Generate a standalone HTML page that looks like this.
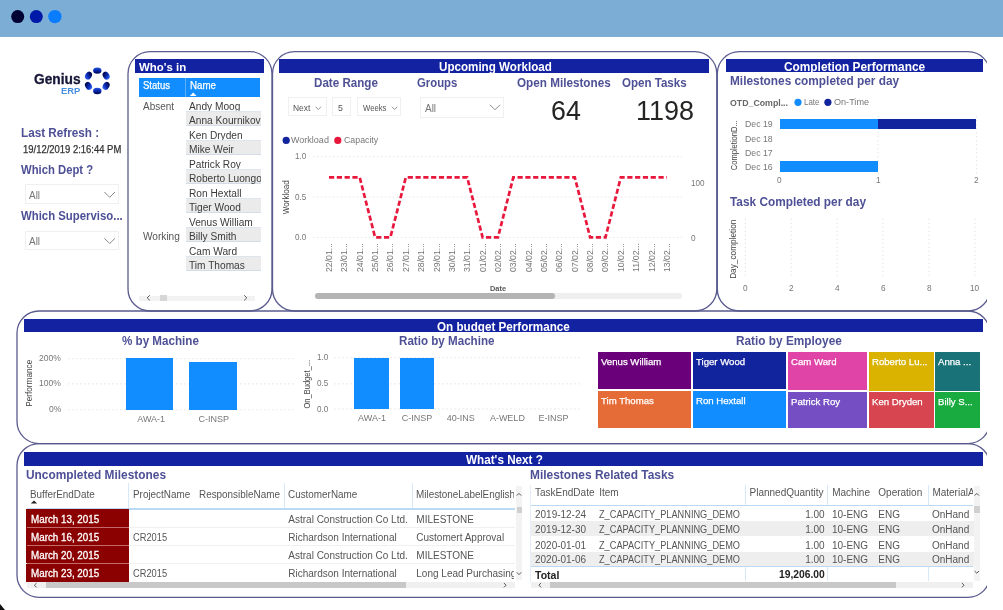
<!DOCTYPE html><html><head><meta charset="utf-8"><style>
html,body{margin:0;padding:0;background:#fff;width:1003px;height:610px;overflow:hidden;position:relative;font-family:"Liberation Sans",sans-serif}
.t{position:absolute;white-space:nowrap;line-height:1;transform-origin:0 0}
.c{position:absolute;overflow:hidden}
</style></head><body><div style="position:absolute;left:0;top:0;width:1003px;height:610px;overflow:hidden;filter:blur(0.35px)">
<svg style="position:absolute;left:0;top:0" width="1003" height="610" viewBox="0 0 1003 610"><line x1="312.8" y1="156.8" x2="682" y2="156.8" stroke="#e4e4e4" stroke-width="1" stroke-dasharray="1.5 2.5"/><line x1="312.8" y1="197.1" x2="682" y2="197.1" stroke="#e4e4e4" stroke-width="1" stroke-dasharray="1.5 2.5"/><line x1="312.8" y1="237.3" x2="682" y2="237.3" stroke="#e4e4e4" stroke-width="1" stroke-dasharray="1.5 2.5"/><line x1="878.1" y1="116" x2="878.1" y2="174" stroke="#e4e4e4" stroke-width="1" stroke-dasharray="1.5 2.5"/><line x1="976.4" y1="116" x2="976.4" y2="174" stroke="#e4e4e4" stroke-width="1" stroke-dasharray="1.5 2.5"/><line x1="745.4" y1="218.6" x2="745.4" y2="278" stroke="#e4e4e4" stroke-width="1" stroke-dasharray="1.5 2.5"/><line x1="791.2" y1="218.6" x2="791.2" y2="278" stroke="#e4e4e4" stroke-width="1" stroke-dasharray="1.5 2.5"/><line x1="837" y1="218.6" x2="837" y2="278" stroke="#e4e4e4" stroke-width="1" stroke-dasharray="1.5 2.5"/><line x1="883" y1="218.6" x2="883" y2="278" stroke="#e4e4e4" stroke-width="1" stroke-dasharray="1.5 2.5"/><line x1="929" y1="218.6" x2="929" y2="278" stroke="#e4e4e4" stroke-width="1" stroke-dasharray="1.5 2.5"/><line x1="975" y1="218.6" x2="975" y2="278" stroke="#e4e4e4" stroke-width="1" stroke-dasharray="1.5 2.5"/><line x1="68" y1="358.7" x2="295" y2="358.7" stroke="#e4e4e4" stroke-width="1" stroke-dasharray="1.5 2.5"/><line x1="68" y1="383.9" x2="295" y2="383.9" stroke="#e4e4e4" stroke-width="1" stroke-dasharray="1.5 2.5"/><line x1="68" y1="409.8" x2="295" y2="409.8" stroke="#e4e4e4" stroke-width="1" stroke-dasharray="1.5 2.5"/><line x1="334.3" y1="357.7" x2="580" y2="357.7" stroke="#e4e4e4" stroke-width="1" stroke-dasharray="1.5 2.5"/><line x1="334.3" y1="383.9" x2="580" y2="383.9" stroke="#e4e4e4" stroke-width="1" stroke-dasharray="1.5 2.5"/><line x1="334.3" y1="409" x2="580" y2="409" stroke="#e4e4e4" stroke-width="1" stroke-dasharray="1.5 2.5"/></svg>
<div style="position:absolute;left:0.00px;top:0.00px;width:1003.00px;height:37.00px;background:#7badd5;"></div>
<div style="position:absolute;left:24.70px;top:184.40px;width:94.20px;height:19.50px;background:transparent;border:1px solid #f0f0f0;box-sizing:border-box;"></div>
<div style="position:absolute;left:24.70px;top:230.70px;width:94.20px;height:19.70px;background:transparent;border:1px solid #f0f0f0;box-sizing:border-box;"></div>
<div style="position:absolute;left:135.3px;top:59.4px;width:128.7px;height:13.6px;background:#1222a0;overflow:hidden" id="bar1"></div>
<div style="position:absolute;left:139.30px;top:77.50px;width:121.20px;height:19.50px;background:#118dff;"></div>
<div style="position:absolute;left:184.60px;top:77.50px;width:0.80px;height:19.50px;background:#5fb0ff;"></div>
<div style="position:absolute;left:185.50px;top:111.48px;width:75.00px;height:14.48px;background:#ebebeb;"></div>
<div style="position:absolute;left:185.50px;top:111.48px;width:75.00px;height:1.00px;background:#dfe5ef;"></div>
<div style="position:absolute;left:185.50px;top:124.96px;width:75.00px;height:1.00px;background:#d4dcea;"></div>
<div style="position:absolute;left:185.50px;top:140.44px;width:75.00px;height:14.48px;background:#ebebeb;"></div>
<div style="position:absolute;left:185.50px;top:140.44px;width:75.00px;height:1.00px;background:#dfe5ef;"></div>
<div style="position:absolute;left:185.50px;top:153.92px;width:75.00px;height:1.00px;background:#d4dcea;"></div>
<div style="position:absolute;left:185.50px;top:169.40px;width:75.00px;height:14.48px;background:#ebebeb;"></div>
<div style="position:absolute;left:185.50px;top:169.40px;width:75.00px;height:1.00px;background:#dfe5ef;"></div>
<div style="position:absolute;left:185.50px;top:182.88px;width:75.00px;height:1.00px;background:#d4dcea;"></div>
<div style="position:absolute;left:185.50px;top:198.36px;width:75.00px;height:14.48px;background:#ebebeb;"></div>
<div style="position:absolute;left:185.50px;top:198.36px;width:75.00px;height:1.00px;background:#dfe5ef;"></div>
<div style="position:absolute;left:185.50px;top:211.84px;width:75.00px;height:1.00px;background:#d4dcea;"></div>
<div style="position:absolute;left:185.50px;top:227.32px;width:75.00px;height:14.48px;background:#ebebeb;"></div>
<div style="position:absolute;left:185.50px;top:227.32px;width:75.00px;height:1.00px;background:#dfe5ef;"></div>
<div style="position:absolute;left:185.50px;top:240.80px;width:75.00px;height:1.00px;background:#d4dcea;"></div>
<div style="position:absolute;left:185.50px;top:256.28px;width:75.00px;height:14.48px;background:#ebebeb;"></div>
<div style="position:absolute;left:185.50px;top:256.28px;width:75.00px;height:1.00px;background:#dfe5ef;"></div>
<div style="position:absolute;left:185.50px;top:269.76px;width:75.00px;height:1.00px;background:#d4dcea;"></div>
<div style="position:absolute;left:139.20px;top:295.50px;width:116.30px;height:5.00px;background:#f2f2f2;"></div>
<div style="position:absolute;left:159.50px;top:295.00px;width:7.00px;height:6.00px;background:#d6d6d6;"></div>
<div style="position:absolute;left:278.7px;top:59.3px;width:430.8px;height:13.4px;background:#1222a0"></div>
<div style="position:absolute;left:287.70px;top:97.40px;width:39.00px;height:19.10px;background:transparent;border:1px solid #f0f0f0;box-sizing:border-box;"></div>
<div style="position:absolute;left:331.80px;top:97.40px;width:19.50px;height:19.10px;background:transparent;border:1px solid #f0f0f0;box-sizing:border-box;"></div>
<div style="position:absolute;left:357.20px;top:97.40px;width:44.10px;height:19.10px;background:transparent;border:1px solid #f0f0f0;box-sizing:border-box;"></div>
<div style="position:absolute;left:420.00px;top:97.40px;width:84.40px;height:20.40px;background:transparent;border:1px solid #f0f0f0;box-sizing:border-box;"></div>
<div style="position:absolute;left:315.00px;top:293.00px;width:367.00px;height:5.50px;background:#efefef;border-radius:3px;"></div>
<div style="position:absolute;left:315.00px;top:293.00px;width:240.20px;height:5.50px;background:#b4b4b4;border-radius:3px;"></div>
<div style="position:absolute;left:725.5px;top:59.3px;width:257.5px;height:13.2px;background:#1222a0"></div>
<div style="position:absolute;left:779.90px;top:118.90px;width:98.20px;height:10.50px;background:#118dff;"></div>
<div style="position:absolute;left:878.10px;top:118.90px;width:98.30px;height:10.50px;background:#12239e;"></div>
<div style="position:absolute;left:779.90px;top:161.10px;width:98.20px;height:10.80px;background:#118dff;"></div>
<div style="position:absolute;left:24.2px;top:318.5px;width:958.5px;height:13.7px;background:#1222a0"></div>
<div style="position:absolute;left:125.50px;top:358.00px;width:47.70px;height:51.80px;background:#118dff;"></div>
<div style="position:absolute;left:189.00px;top:362.10px;width:47.70px;height:47.70px;background:#118dff;"></div>
<div style="position:absolute;left:354.10px;top:357.70px;width:34.90px;height:51.30px;background:#118dff;"></div>
<div style="position:absolute;left:399.70px;top:357.70px;width:34.10px;height:51.30px;background:#118dff;"></div>
<div style="position:absolute;left:598.40px;top:352.00px;width:92.90px;height:37.30px;background:#6b007b;"></div>
<div style="position:absolute;left:598.40px;top:391.30px;width:92.90px;height:36.70px;background:#e66c37;"></div>
<div style="position:absolute;left:693.30px;top:352.00px;width:92.50px;height:37.30px;background:#12239e;"></div>
<div style="position:absolute;left:693.30px;top:391.30px;width:92.50px;height:36.70px;background:#118dff;"></div>
<div style="position:absolute;left:787.70px;top:352.00px;width:79.20px;height:37.70px;background:#e044a7;"></div>
<div style="position:absolute;left:787.70px;top:391.80px;width:79.20px;height:36.20px;background:#744ec2;"></div>
<div style="position:absolute;left:869.00px;top:352.00px;width:64.50px;height:38.70px;background:#d9b300;"></div>
<div style="position:absolute;left:869.00px;top:392.40px;width:64.50px;height:35.60px;background:#d64550;"></div>
<div style="position:absolute;left:935.40px;top:352.00px;width:44.60px;height:38.70px;background:#197278;"></div>
<div style="position:absolute;left:935.40px;top:391.80px;width:44.60px;height:36.20px;background:#1aab40;"></div>
<div style="position:absolute;left:24.2px;top:451.9px;width:958.5px;height:13.7px;background:#1222a0"></div>
<div style="position:absolute;left:128.40px;top:483.30px;width:1.00px;height:24.70px;background:#d8e8f6;"></div>
<div style="position:absolute;left:283.80px;top:483.30px;width:1.00px;height:24.70px;background:#d8e8f6;"></div>
<div style="position:absolute;left:411.50px;top:483.30px;width:1.00px;height:24.70px;background:#d8e8f6;"></div>
<div style="position:absolute;left:26.50px;top:508.00px;width:488.50px;height:1.50px;background:#b9d9f5;"></div>
<div style="position:absolute;left:26.20px;top:509.30px;width:102.70px;height:18.00px;background:#8b0000;"></div>
<div style="position:absolute;left:26.20px;top:527.30px;width:102.70px;height:18.10px;background:#8b0000;"></div>
<div style="position:absolute;left:26.50px;top:526.70px;width:102.40px;height:1.20px;background:#c46a6a;"></div>
<div style="position:absolute;left:128.90px;top:526.80px;width:386.10px;height:1.00px;background:#f0f0f0;"></div>
<div style="position:absolute;left:26.20px;top:545.40px;width:102.70px;height:18.10px;background:#8b0000;"></div>
<div style="position:absolute;left:26.50px;top:544.80px;width:102.40px;height:1.20px;background:#c46a6a;"></div>
<div style="position:absolute;left:128.90px;top:544.90px;width:386.10px;height:1.00px;background:#f0f0f0;"></div>
<div style="position:absolute;left:26.20px;top:563.50px;width:102.70px;height:18.10px;background:#8b0000;"></div>
<div style="position:absolute;left:26.50px;top:562.90px;width:102.40px;height:1.20px;background:#c46a6a;"></div>
<div style="position:absolute;left:128.90px;top:563.00px;width:386.10px;height:1.00px;background:#f0f0f0;"></div>
<div style="position:absolute;left:515.90px;top:486.00px;width:6.30px;height:94.40px;background:#f3f3f3;"></div>
<div style="position:absolute;left:516.50px;top:506.60px;width:5.10px;height:6.90px;background:#d0d0d0;"></div>
<div style="position:absolute;left:26.50px;top:582.40px;width:488.50px;height:5.70px;background:#f0f0f0;"></div>
<div style="position:absolute;left:46.00px;top:582.40px;width:360.00px;height:5.70px;background:#c8c8c8;"></div>
<div style="position:absolute;left:530.20px;top:485.00px;width:0.80px;height:97.00px;background:#e4eef8;"></div>
<div style="position:absolute;left:744.60px;top:485.00px;width:1.00px;height:20.00px;background:#d8e8f6;"></div>
<div style="position:absolute;left:744.60px;top:566.50px;width:1.00px;height:14.50px;background:#d8e8f6;"></div>
<div style="position:absolute;left:827.20px;top:485.00px;width:1.00px;height:20.00px;background:#d8e8f6;"></div>
<div style="position:absolute;left:827.20px;top:566.50px;width:1.00px;height:14.50px;background:#d8e8f6;"></div>
<div style="position:absolute;left:927.70px;top:485.00px;width:1.00px;height:20.00px;background:#d8e8f6;"></div>
<div style="position:absolute;left:927.70px;top:566.50px;width:1.00px;height:14.50px;background:#d8e8f6;"></div>
<div style="position:absolute;left:530.70px;top:504.60px;width:442.80px;height:1.40px;background:#b9d9f5;"></div>
<div style="position:absolute;left:531.00px;top:520.90px;width:442.50px;height:15.50px;background:#eeeeee;"></div>
<div style="position:absolute;left:531.00px;top:551.80px;width:442.50px;height:14.20px;background:#eeeeee;"></div>
<div style="position:absolute;left:530.70px;top:565.50px;width:442.80px;height:1.40px;background:#b9d9f5;"></div>
<div style="position:absolute;left:531.00px;top:582.40px;width:442.00px;height:5.50px;background:#f0f0f0;"></div>
<div style="position:absolute;left:550.40px;top:582.40px;width:346.10px;height:5.50px;background:#c8c8c8;"></div>
<div style="position:absolute;left:973.80px;top:486.00px;width:6.00px;height:95.00px;background:#f3f3f3;"></div>
<div style="position:absolute;left:974.40px;top:505.90px;width:5.40px;height:6.70px;background:#d0d0d0;"></div>
<svg style="position:absolute;left:0;top:0" width="1003" height="610" viewBox="0 0 1003 610"><polygon points="0,604 0,610 5,610" fill="#111"/><circle cx="17.7" cy="16.6" r="6.5" fill="#000033"/><circle cx="36.3" cy="16.6" r="6.5" fill="#0019a8"/><circle cx="54.9" cy="16.6" r="6.7" fill="#0a7cff"/><defs><radialGradient id="lg" cx="97.3" cy="80.8" r="13.5" gradientUnits="userSpaceOnUse"><stop offset="0.55" stop-color="#000a55"/><stop offset="0.8" stop-color="#0a2ab0"/><stop offset="1" stop-color="#2a5ae8"/></radialGradient></defs><ellipse cx="97.30" cy="70.60" rx="4.2" ry="3.2" transform="rotate(0.0 97.30 70.60)" fill="url(#lg)"/><ellipse cx="106.13" cy="75.70" rx="4.2" ry="3.2" transform="rotate(60.0 106.13 75.70)" fill="url(#lg)"/><ellipse cx="106.13" cy="85.90" rx="4.2" ry="3.2" transform="rotate(120.0 106.13 85.90)" fill="url(#lg)"/><ellipse cx="97.30" cy="91.00" rx="4.2" ry="3.2" transform="rotate(180.0 97.30 91.00)" fill="url(#lg)"/><ellipse cx="88.47" cy="85.90" rx="4.2" ry="3.2" transform="rotate(240.0 88.47 85.90)" fill="url(#lg)"/><ellipse cx="88.47" cy="75.70" rx="4.2" ry="3.2" transform="rotate(-60.0 88.47 75.70)" fill="url(#lg)"/><polyline points="104.4,192.0 109.7,197.3 115,192.0" fill="none" stroke="#888" stroke-width="1"/><polyline points="104.4,238.3 109.7,243.6 115,238.3" fill="none" stroke="#888" stroke-width="1"/><polygon points="189.8,96 193.2,92.6 196.6,96" fill="#fff"/><polyline points="149.8,295.2 147.2,297.8 149.8,300.4" fill="none" stroke="#555" stroke-width="1"/><polyline points="244.2,295.2 246.8,297.8 244.2,300.4" fill="none" stroke="#555" stroke-width="1"/><polyline points="315.7,106.8 318.35,109.5 321,106.8" fill="none" stroke="#888" stroke-width="0.9"/><polyline points="392,106.8 394.6,109.5 397.2,106.8" fill="none" stroke="#888" stroke-width="0.9"/><polyline points="490,104.8 495,109.8 500,104.8" fill="none" stroke="#888" stroke-width="1"/><circle cx="286.2" cy="140.4" r="3.6" fill="#12239e"/><circle cx="337.8" cy="140.4" r="3.6" fill="#e8183c"/><polyline points="329.0,177.4 344.4,177.4 359.7,177.4 375.1,237.3 390.4,237.3 405.8,177.4 421.2,177.4 436.5,177.4 451.9,177.4 467.2,177.4 482.6,237.3 498.0,237.3 513.3,177.4 528.7,177.4 544.0,177.4 559.4,177.4 574.8,177.4 590.1,237.3 605.5,237.3 620.8,177.4 636.2,177.4 651.6,177.4 666.9,177.4" fill="none" stroke="#e8183c" stroke-width="2.7" stroke-dasharray="5.2 2.6" stroke-linejoin="miter"/><circle cx="798" cy="102.3" r="3.6" fill="#118dff"/><circle cx="827.9" cy="102.3" r="3.6" fill="#12239e"/><polygon points="30.8,503.5 34,500.5 37.2,503.5" fill="#222"/><polyline points="516.8,495.6 519.0,493.4 521.2,495.6" fill="none" stroke="#555" stroke-width="1"/><polyline points="516.8,572.4 519.0,574.6 521.2,572.4" fill="none" stroke="#555" stroke-width="1"/><polyline points="36.6,583.0 34.4,585.2 36.6,587.4" fill="none" stroke="#555" stroke-width="1"/><polyline points="503.9,583.0 506.1,585.2 503.9,587.4" fill="none" stroke="#555" stroke-width="1"/><polyline points="541.1,583.0 538.9,585.2 541.1,587.4" fill="none" stroke="#555" stroke-width="1"/><polyline points="961.9,583.0 964.1,585.2 961.9,587.4" fill="none" stroke="#555" stroke-width="1"/><polyline points="974.6,495.6 976.8,493.4 979.0,495.6" fill="none" stroke="#555" stroke-width="1"/><polyline points="974.6,571.0 976.8,573.2 979.0,571.0" fill="none" stroke="#555" stroke-width="1"/></svg>
<span class="t" style="font-size:13.8px;color:#161638;font-weight:bold;font-family:'Liberation Sans', sans-serif;-webkit-text-stroke:0.3px #161638;left:34.00px;top:72.62px;transform:scaleX(0.9961)">Genius</span>
<span class="t" style="font-size:8.6px;color:#4a8ee0;font-weight:bold;font-family:'Liberation Sans', sans-serif;left:61.40px;top:86.52px;transform:scaleX(1.0921)">ERP</span>
<span class="t" style="font-size:12.5px;color:#4e5096;font-weight:bold;font-family:'Liberation Sans', sans-serif;left:20.80px;top:126.52px;transform:scaleX(0.9381)">Last Refresh :</span>
<span class="t" style="font-size:10px;color:#333;font-weight:normal;font-family:'Liberation Sans', sans-serif;-webkit-text-stroke:0.25px #333;left:22.90px;top:144.84px;transform:scaleX(0.9453)">19/12/2019 2:16:44 PM</span>
<span class="t" style="font-size:12px;color:#4e5096;font-weight:bold;font-family:'Liberation Sans', sans-serif;left:21.00px;top:163.84px;transform:scaleX(0.9404)">Which Dept ?</span>
<span class="t" style="font-size:12px;color:#4e5096;font-weight:bold;font-family:'Liberation Sans', sans-serif;left:21.10px;top:210.04px;transform:scaleX(0.9473)">Which Superviso...</span>
<span class="t" style="font-size:10px;color:#777;font-weight:normal;font-family:'Liberation Sans', sans-serif;left:29.00px;top:190.84px;transform:scaleX(0.9978)">All</span>
<span class="t" style="font-size:10px;color:#777;font-weight:normal;font-family:'Liberation Sans', sans-serif;left:29.00px;top:236.73px;transform:scaleX(0.9978)">All</span>
<div class="c" style="left:135.3px;top:59.4px;width:128.70px;height:13.60px"><span class="t" style="font-size:11.5px;color:#fff;font-weight:bold;font-family:'Liberation Sans', sans-serif;left:4.10px;top:2.87px;transform:scaleX(0.9947)">Who's in</span></div>
<span class="t" style="font-size:10.5px;color:#fff;font-weight:normal;font-family:'Liberation Sans', sans-serif;-webkit-text-stroke:0.25px #fff;left:143.00px;top:80.11px;transform:scaleX(0.9066)">Status</span>
<span class="t" style="font-size:10.5px;color:#fff;font-weight:normal;font-family:'Liberation Sans', sans-serif;-webkit-text-stroke:0.25px #fff;left:190.00px;top:80.11px;transform:scaleX(0.9281)">Name</span>
<div class="c" style="left:185.5px;top:97.0px;width:75.00px;height:14.48px"><span class="t" style="font-size:10px;color:#3a3a3a;font-weight:normal;font-family:'Liberation Sans', sans-serif;left:3.80px;top:4.73px;transform:scaleX(1.0150)">Andy Moog</span></div>
<div class="c" style="left:185.5px;top:111.48px;width:75.00px;height:14.48px"><span class="t" style="font-size:10px;color:#3a3a3a;font-weight:normal;font-family:'Liberation Sans', sans-serif;left:3.80px;top:4.73px;transform:scaleX(1.0150)">Anna Kournikova</span></div>
<div class="c" style="left:185.5px;top:125.96000000000001px;width:75.00px;height:14.48px"><span class="t" style="font-size:10px;color:#3a3a3a;font-weight:normal;font-family:'Liberation Sans', sans-serif;left:3.80px;top:4.73px;transform:scaleX(1.0150)">Ken Dryden</span></div>
<div class="c" style="left:185.5px;top:140.44px;width:75.00px;height:14.48px"><span class="t" style="font-size:10px;color:#3a3a3a;font-weight:normal;font-family:'Liberation Sans', sans-serif;left:3.80px;top:4.73px;transform:scaleX(1.0150)">Mike Weir</span></div>
<div class="c" style="left:185.5px;top:154.92000000000002px;width:75.00px;height:14.48px"><span class="t" style="font-size:10px;color:#3a3a3a;font-weight:normal;font-family:'Liberation Sans', sans-serif;left:3.80px;top:4.73px;transform:scaleX(1.0150)">Patrick Roy</span></div>
<div class="c" style="left:185.5px;top:169.4px;width:75.00px;height:14.48px"><span class="t" style="font-size:10px;color:#3a3a3a;font-weight:normal;font-family:'Liberation Sans', sans-serif;left:3.80px;top:4.73px;transform:scaleX(1.0150)">Roberto Luongo</span></div>
<div class="c" style="left:185.5px;top:183.88px;width:75.00px;height:14.48px"><span class="t" style="font-size:10px;color:#3a3a3a;font-weight:normal;font-family:'Liberation Sans', sans-serif;left:3.80px;top:4.73px;transform:scaleX(1.0150)">Ron Hextall</span></div>
<div class="c" style="left:185.5px;top:198.36px;width:75.00px;height:14.48px"><span class="t" style="font-size:10px;color:#3a3a3a;font-weight:normal;font-family:'Liberation Sans', sans-serif;left:3.80px;top:4.73px;transform:scaleX(1.0150)">Tiger Wood</span></div>
<div class="c" style="left:185.5px;top:212.84px;width:75.00px;height:14.48px"><span class="t" style="font-size:10px;color:#3a3a3a;font-weight:normal;font-family:'Liberation Sans', sans-serif;left:3.80px;top:4.73px;transform:scaleX(1.0150)">Venus William</span></div>
<div class="c" style="left:185.5px;top:227.32px;width:75.00px;height:14.48px"><span class="t" style="font-size:10px;color:#3a3a3a;font-weight:normal;font-family:'Liberation Sans', sans-serif;left:3.80px;top:4.73px;transform:scaleX(1.0150)">Billy Smith</span></div>
<div class="c" style="left:185.5px;top:241.8px;width:75.00px;height:14.48px"><span class="t" style="font-size:10px;color:#3a3a3a;font-weight:normal;font-family:'Liberation Sans', sans-serif;left:3.80px;top:4.73px;transform:scaleX(1.0150)">Cam Ward</span></div>
<div class="c" style="left:185.5px;top:256.28px;width:75.00px;height:14.48px"><span class="t" style="font-size:10px;color:#3a3a3a;font-weight:normal;font-family:'Liberation Sans', sans-serif;left:3.80px;top:4.74px;transform:scaleX(1.0150)">Tim Thomas</span></div>
<span class="t" style="font-size:10px;color:#555;font-weight:normal;font-family:'Liberation Sans', sans-serif;left:143.00px;top:101.63px;transform:scaleX(0.9955)">Absent</span>
<span class="t" style="font-size:10px;color:#555;font-weight:normal;font-family:'Liberation Sans', sans-serif;left:143.00px;top:231.66px;transform:scaleX(1.0100)">Working</span>
<div class="c" style="left:278.7px;top:59.3px;width:430.80px;height:13.40px"><span class="t" style="font-size:12px;color:#fff;font-weight:bold;font-family:'Liberation Sans', sans-serif;left:160.10px;top:2.04px;transform:scaleX(0.9686)">Upcoming Workload</span></div>
<span class="t" style="font-size:12px;color:#4e5096;font-weight:bold;font-family:'Liberation Sans', sans-serif;left:313.60px;top:76.74px;transform:scaleX(0.9677)">Date Range</span>
<span class="t" style="font-size:12px;color:#4e5096;font-weight:bold;font-family:'Liberation Sans', sans-serif;left:416.70px;top:76.54px;transform:scaleX(0.9444)">Groups</span>
<span class="t" style="font-size:12px;color:#4e5096;font-weight:bold;font-family:'Liberation Sans', sans-serif;left:516.60px;top:76.84px;transform:scaleX(0.9757)">Open Milestones</span>
<span class="t" style="font-size:12px;color:#4e5096;font-weight:bold;font-family:'Liberation Sans', sans-serif;left:622.30px;top:76.84px;transform:scaleX(0.9622)">Open Tasks</span>
<span class="t" style="font-size:28px;color:#252423;font-weight:normal;font-family:'Liberation Sans', sans-serif;left:551.00px;top:97.00px;transform:scaleX(0.9565)">64</span>
<span class="t" style="font-size:28px;color:#252423;font-weight:normal;font-family:'Liberation Sans', sans-serif;left:635.60px;top:97.00px;transform:scaleX(0.9615)">1198</span>
<span class="t" style="font-size:9px;color:#555;font-weight:normal;font-family:'Liberation Sans', sans-serif;left:293.30px;top:103.78px;transform:scaleX(0.9343)">Next</span>
<span class="t" style="font-size:9.5px;color:#555;font-weight:normal;font-family:'Liberation Sans', sans-serif;left:337.70px;top:103.36px;transform:scaleX(0.9200)">5</span>
<span class="t" style="font-size:9px;color:#555;font-weight:normal;font-family:'Liberation Sans', sans-serif;left:362.60px;top:103.78px;transform:scaleX(0.8558)">Weeks</span>
<span class="t" style="font-size:10px;color:#777;font-weight:normal;font-family:'Liberation Sans', sans-serif;left:425.20px;top:104.13px;transform:scaleX(0.9978)">All</span>
<span class="t" style="font-size:9px;color:#777;font-weight:normal;font-family:'Liberation Sans', sans-serif;left:291.30px;top:135.98px;transform:scaleX(1.0011)">Workload</span>
<span class="t" style="font-size:9px;color:#777;font-weight:normal;font-family:'Liberation Sans', sans-serif;left:343.60px;top:135.98px;transform:scaleX(0.9767)">Capacity</span>
<span class="t" style="font-size:9px;color:#777;font-weight:normal;font-family:'Liberation Sans', sans-serif;left:295.40px;top:152.38px;transform:scaleX(0.9029)">1.0</span>
<span class="t" style="font-size:9px;color:#777;font-weight:normal;font-family:'Liberation Sans', sans-serif;left:295.40px;top:192.68px;transform:scaleX(0.9029)">0.5</span>
<span class="t" style="font-size:9px;color:#777;font-weight:normal;font-family:'Liberation Sans', sans-serif;left:295.40px;top:232.88px;transform:scaleX(0.9029)">0.0</span>
<span class="t" style="font-size:8.5px;color:#444;font-weight:normal;font-family:'Liberation Sans', sans-serif;left:267.93px;top:192.75px;transform-origin:50% 50%;transform:rotate(-90deg) scaleX(0.9455)">Workload</span>
<span class="t" style="font-size:9px;color:#777;font-weight:normal;font-family:'Liberation Sans', sans-serif;left:690.50px;top:178.98px;transform:scaleX(0.8981)">100</span>
<span class="t" style="font-size:9px;color:#777;font-weight:normal;font-family:'Liberation Sans', sans-serif;left:690.89px;top:233.78px;transform:scaleX(0.9200)">0</span>
<span class="t" style="font-size:9px;color:#777;font-weight:normal;font-family:'Liberation Sans', sans-serif;left:313.98px;top:253.00px;transform-origin:50% 50%;transform:rotate(-90deg) scaleX(0.9657)">22/01...</span>
<span class="t" style="font-size:9px;color:#777;font-weight:normal;font-family:'Liberation Sans', sans-serif;left:329.34px;top:253.00px;transform-origin:50% 50%;transform:rotate(-90deg) scaleX(0.9657)">23/01...</span>
<span class="t" style="font-size:9px;color:#777;font-weight:normal;font-family:'Liberation Sans', sans-serif;left:344.70px;top:253.00px;transform-origin:50% 50%;transform:rotate(-90deg) scaleX(0.9657)">24/01...</span>
<span class="t" style="font-size:9px;color:#777;font-weight:normal;font-family:'Liberation Sans', sans-serif;left:360.06px;top:253.00px;transform-origin:50% 50%;transform:rotate(-90deg) scaleX(0.9657)">25/01...</span>
<span class="t" style="font-size:9px;color:#777;font-weight:normal;font-family:'Liberation Sans', sans-serif;left:375.42px;top:253.00px;transform-origin:50% 50%;transform:rotate(-90deg) scaleX(0.9657)">26/01...</span>
<span class="t" style="font-size:9px;color:#777;font-weight:normal;font-family:'Liberation Sans', sans-serif;left:390.78px;top:253.00px;transform-origin:50% 50%;transform:rotate(-90deg) scaleX(0.9657)">27/01...</span>
<span class="t" style="font-size:9px;color:#777;font-weight:normal;font-family:'Liberation Sans', sans-serif;left:406.14px;top:253.00px;transform-origin:50% 50%;transform:rotate(-90deg) scaleX(0.9657)">28/01...</span>
<span class="t" style="font-size:9px;color:#777;font-weight:normal;font-family:'Liberation Sans', sans-serif;left:421.50px;top:253.00px;transform-origin:50% 50%;transform:rotate(-90deg) scaleX(0.9657)">29/01...</span>
<span class="t" style="font-size:9px;color:#777;font-weight:normal;font-family:'Liberation Sans', sans-serif;left:436.86px;top:253.00px;transform-origin:50% 50%;transform:rotate(-90deg) scaleX(0.9657)">30/01...</span>
<span class="t" style="font-size:9px;color:#777;font-weight:normal;font-family:'Liberation Sans', sans-serif;left:452.22px;top:253.00px;transform-origin:50% 50%;transform:rotate(-90deg) scaleX(0.9657)">31/01...</span>
<span class="t" style="font-size:9px;color:#777;font-weight:normal;font-family:'Liberation Sans', sans-serif;left:467.58px;top:253.00px;transform-origin:50% 50%;transform:rotate(-90deg) scaleX(0.9657)">01/02...</span>
<span class="t" style="font-size:9px;color:#777;font-weight:normal;font-family:'Liberation Sans', sans-serif;left:482.94px;top:253.00px;transform-origin:50% 50%;transform:rotate(-90deg) scaleX(0.9657)">02/02...</span>
<span class="t" style="font-size:9px;color:#777;font-weight:normal;font-family:'Liberation Sans', sans-serif;left:498.30px;top:253.00px;transform-origin:50% 50%;transform:rotate(-90deg) scaleX(0.9657)">03/02...</span>
<span class="t" style="font-size:9px;color:#777;font-weight:normal;font-family:'Liberation Sans', sans-serif;left:513.66px;top:253.00px;transform-origin:50% 50%;transform:rotate(-90deg) scaleX(0.9657)">04/02...</span>
<span class="t" style="font-size:9px;color:#777;font-weight:normal;font-family:'Liberation Sans', sans-serif;left:529.02px;top:253.00px;transform-origin:50% 50%;transform:rotate(-90deg) scaleX(0.9657)">05/02...</span>
<span class="t" style="font-size:9px;color:#777;font-weight:normal;font-family:'Liberation Sans', sans-serif;left:544.38px;top:253.00px;transform-origin:50% 50%;transform:rotate(-90deg) scaleX(0.9657)">06/02...</span>
<span class="t" style="font-size:9px;color:#777;font-weight:normal;font-family:'Liberation Sans', sans-serif;left:559.74px;top:253.00px;transform-origin:50% 50%;transform:rotate(-90deg) scaleX(0.9657)">07/02...</span>
<span class="t" style="font-size:9px;color:#777;font-weight:normal;font-family:'Liberation Sans', sans-serif;left:575.10px;top:253.00px;transform-origin:50% 50%;transform:rotate(-90deg) scaleX(0.9657)">08/02...</span>
<span class="t" style="font-size:9px;color:#777;font-weight:normal;font-family:'Liberation Sans', sans-serif;left:590.46px;top:253.00px;transform-origin:50% 50%;transform:rotate(-90deg) scaleX(0.9657)">09/02...</span>
<span class="t" style="font-size:9px;color:#777;font-weight:normal;font-family:'Liberation Sans', sans-serif;left:605.82px;top:253.00px;transform-origin:50% 50%;transform:rotate(-90deg) scaleX(0.9657)">10/02...</span>
<span class="t" style="font-size:9px;color:#777;font-weight:normal;font-family:'Liberation Sans', sans-serif;left:621.52px;top:253.00px;transform-origin:50% 50%;transform:rotate(-90deg) scaleX(0.9878)">11/02...</span>
<span class="t" style="font-size:9px;color:#777;font-weight:normal;font-family:'Liberation Sans', sans-serif;left:636.54px;top:253.00px;transform-origin:50% 50%;transform:rotate(-90deg) scaleX(0.9657)">12/02...</span>
<span class="t" style="font-size:9px;color:#777;font-weight:normal;font-family:'Liberation Sans', sans-serif;left:651.90px;top:253.00px;transform-origin:50% 50%;transform:rotate(-90deg) scaleX(0.9657)">13/02...</span>
<span class="t" style="font-size:8px;color:#555;font-weight:bold;font-family:'Liberation Sans', sans-serif;left:490.00px;top:284.63px;transform:scaleX(0.9225)">Date</span>
<div class="c" style="left:725.5px;top:59.3px;width:257.50px;height:13.20px"><span class="t" style="font-size:12px;color:#fff;font-weight:bold;font-family:'Liberation Sans', sans-serif;left:58.45px;top:1.54px;transform:scaleX(0.9888)">Completion Performance</span></div>
<span class="t" style="font-size:12px;color:#4e5096;font-weight:bold;font-family:'Liberation Sans', sans-serif;left:729.80px;top:74.84px;transform:scaleX(0.9872)">Milestones completed per day</span>
<span class="t" style="font-size:9.5px;color:#666;font-weight:bold;font-family:'Liberation Sans', sans-serif;left:729.80px;top:97.56px;transform:scaleX(0.9234)">OTD_Compl...</span>
<span class="t" style="font-size:9px;color:#777;font-weight:normal;font-family:'Liberation Sans', sans-serif;left:804.00px;top:97.98px;transform:scaleX(0.8841)">Late</span>
<span class="t" style="font-size:9px;color:#777;font-weight:normal;font-family:'Liberation Sans', sans-serif;left:834.30px;top:97.98px;transform:scaleX(1.0095)">On-Time</span>
<span class="t" style="font-size:9.5px;color:#777;font-weight:normal;font-family:'Liberation Sans', sans-serif;left:744.90px;top:119.36px;transform:scaleX(0.9200)">Dec 19</span>
<span class="t" style="font-size:9.5px;color:#777;font-weight:normal;font-family:'Liberation Sans', sans-serif;left:744.90px;top:133.66px;transform:scaleX(0.9200)">Dec 18</span>
<span class="t" style="font-size:9.5px;color:#777;font-weight:normal;font-family:'Liberation Sans', sans-serif;left:744.90px;top:147.66px;transform:scaleX(0.9200)">Dec 17</span>
<span class="t" style="font-size:9.5px;color:#777;font-weight:normal;font-family:'Liberation Sans', sans-serif;left:744.90px;top:161.86px;transform:scaleX(0.9200)">Dec 16</span>
<span class="t" style="font-size:9px;color:#777;font-weight:normal;font-family:'Liberation Sans', sans-serif;left:776.69px;top:176.08px;transform:scaleX(0.9200)">0</span>
<span class="t" style="font-size:9px;color:#777;font-weight:normal;font-family:'Liberation Sans', sans-serif;left:875.69px;top:176.08px;transform:scaleX(0.9200)">1</span>
<span class="t" style="font-size:9px;color:#777;font-weight:normal;font-family:'Liberation Sans', sans-serif;left:974.09px;top:176.08px;transform:scaleX(0.9200)">2</span>
<span class="t" style="font-size:8.5px;color:#444;font-weight:normal;font-family:'Liberation Sans', sans-serif;left:705.99px;top:141.45px;transform-origin:50% 50%;transform:rotate(-90deg) scaleX(0.8858)">CompletionD...</span>
<span class="t" style="font-size:12px;color:#4e5096;font-weight:bold;font-family:'Liberation Sans', sans-serif;left:730.00px;top:195.84px;transform:scaleX(0.9867)">Task Completed per day</span>
<span class="t" style="font-size:8.5px;color:#444;font-weight:normal;font-family:'Liberation Sans', sans-serif;left:702.82px;top:245.35px;transform-origin:50% 50%;transform:rotate(-90deg) scaleX(0.9712)">Day_completion</span>
<span class="t" style="font-size:9px;color:#777;font-weight:normal;font-family:'Liberation Sans', sans-serif;left:743.09px;top:284.18px;transform:scaleX(0.9200)">0</span>
<span class="t" style="font-size:9px;color:#777;font-weight:normal;font-family:'Liberation Sans', sans-serif;left:788.89px;top:284.18px;transform:scaleX(0.9200)">2</span>
<span class="t" style="font-size:9px;color:#777;font-weight:normal;font-family:'Liberation Sans', sans-serif;left:834.69px;top:284.18px;transform:scaleX(0.9200)">4</span>
<span class="t" style="font-size:9px;color:#777;font-weight:normal;font-family:'Liberation Sans', sans-serif;left:880.69px;top:284.18px;transform:scaleX(0.9200)">6</span>
<span class="t" style="font-size:9px;color:#777;font-weight:normal;font-family:'Liberation Sans', sans-serif;left:926.69px;top:284.18px;transform:scaleX(0.9200)">8</span>
<span class="t" style="font-size:9px;color:#777;font-weight:normal;font-family:'Liberation Sans', sans-serif;left:970.39px;top:284.18px;transform:scaleX(0.9200)">10</span>
<div class="c" style="left:24.2px;top:318.5px;width:958.50px;height:13.70px"><span class="t" style="font-size:12px;color:#fff;font-weight:bold;font-family:'Liberation Sans', sans-serif;left:413.20px;top:2.34px;transform:scaleX(0.9716)">On budget Performance</span></div>
<span class="t" style="font-size:12px;color:#4e5096;font-weight:bold;font-family:'Liberation Sans', sans-serif;left:121.95px;top:334.74px;transform:scaleX(0.9690)">% by Machine</span>
<span class="t" style="font-size:9px;color:#777;font-weight:normal;font-family:'Liberation Sans', sans-serif;left:39.42px;top:354.28px;transform:scaleX(0.9500)">200%</span>
<span class="t" style="font-size:9px;color:#777;font-weight:normal;font-family:'Liberation Sans', sans-serif;left:39.42px;top:379.48px;transform:scaleX(0.9500)">100%</span>
<span class="t" style="font-size:9px;color:#777;font-weight:normal;font-family:'Liberation Sans', sans-serif;left:48.94px;top:405.38px;transform:scaleX(0.9500)">0%</span>
<span class="t" style="font-size:8.5px;color:#444;font-weight:normal;font-family:'Liberation Sans', sans-serif;left:4.86px;top:379.05px;transform-origin:50% 50%;transform:rotate(-90deg) scaleX(0.9657)">Performance</span>
<span class="t" style="font-size:9px;color:#777;font-weight:normal;font-family:'Liberation Sans', sans-serif;left:137.28px;top:414.58px;transform:scaleX(1.0000)">AWA-1</span>
<span class="t" style="font-size:9px;color:#777;font-weight:normal;font-family:'Liberation Sans', sans-serif;left:198.54px;top:414.58px;transform:scaleX(1.0000)">C-INSP</span>
<span class="t" style="font-size:12px;color:#4e5096;font-weight:bold;font-family:'Liberation Sans', sans-serif;left:398.65px;top:334.74px;transform:scaleX(0.9677)">Ratio by Machine</span>
<span class="t" style="font-size:9px;color:#777;font-weight:normal;font-family:'Liberation Sans', sans-serif;left:316.74px;top:353.28px;transform:scaleX(0.9000)">1.0</span>
<span class="t" style="font-size:9px;color:#777;font-weight:normal;font-family:'Liberation Sans', sans-serif;left:316.74px;top:379.48px;transform:scaleX(0.9000)">0.5</span>
<span class="t" style="font-size:9px;color:#777;font-weight:normal;font-family:'Liberation Sans', sans-serif;left:316.74px;top:404.58px;transform:scaleX(0.9000)">0.0</span>
<span class="t" style="font-size:8.5px;color:#444;font-weight:normal;font-family:'Liberation Sans', sans-serif;left:280.09px;top:379.55px;transform-origin:50% 50%;transform:rotate(-90deg) scaleX(0.8846)">On_Budget_...</span>
<span class="t" style="font-size:9px;color:#777;font-weight:normal;font-family:'Liberation Sans', sans-serif;left:358.08px;top:413.58px;transform:scaleX(1.0000)">AWA-1</span>
<span class="t" style="font-size:9px;color:#777;font-weight:normal;font-family:'Liberation Sans', sans-serif;left:401.74px;top:413.58px;transform:scaleX(1.0000)">C-INSP</span>
<span class="t" style="font-size:9px;color:#777;font-weight:normal;font-family:'Liberation Sans', sans-serif;left:446.69px;top:413.58px;transform:scaleX(1.0000)">40-INS</span>
<span class="t" style="font-size:9px;color:#777;font-weight:normal;font-family:'Liberation Sans', sans-serif;left:489.89px;top:413.58px;transform:scaleX(1.0000)">A-WELD</span>
<span class="t" style="font-size:9px;color:#777;font-weight:normal;font-family:'Liberation Sans', sans-serif;left:538.39px;top:413.58px;transform:scaleX(1.0000)">E-INSP</span>
<span class="t" style="font-size:12px;color:#4e5096;font-weight:bold;font-family:'Liberation Sans', sans-serif;left:736.00px;top:334.74px;transform:scaleX(0.9853)">Ratio by Employee</span>
<div class="c" style="left:598.4px;top:352px;width:92.90px;height:37.30px"><span class="t" style="font-size:9.8px;color:#fff;font-weight:normal;font-family:'Liberation Sans', sans-serif;-webkit-text-stroke:0.25px #fff;left:2.90px;top:5.00px;transform:scaleX(0.9800)">Venus William</span></div>
<div class="c" style="left:598.4px;top:391.3px;width:92.90px;height:36.70px"><span class="t" style="font-size:9.8px;color:#fff;font-weight:normal;font-family:'Liberation Sans', sans-serif;-webkit-text-stroke:0.25px #fff;left:2.90px;top:5.00px;transform:scaleX(0.9800)">Tim Thomas</span></div>
<div class="c" style="left:693.3px;top:352px;width:92.50px;height:37.30px"><span class="t" style="font-size:9.8px;color:#fff;font-weight:normal;font-family:'Liberation Sans', sans-serif;-webkit-text-stroke:0.25px #fff;left:2.90px;top:5.00px;transform:scaleX(0.9800)">Tiger Wood</span></div>
<div class="c" style="left:693.3px;top:391.3px;width:92.50px;height:36.70px"><span class="t" style="font-size:9.8px;color:#fff;font-weight:normal;font-family:'Liberation Sans', sans-serif;-webkit-text-stroke:0.25px #fff;left:2.90px;top:5.00px;transform:scaleX(0.9800)">Ron Hextall</span></div>
<div class="c" style="left:787.7px;top:352px;width:79.20px;height:37.70px"><span class="t" style="font-size:9.8px;color:#fff;font-weight:normal;font-family:'Liberation Sans', sans-serif;-webkit-text-stroke:0.25px #fff;left:2.90px;top:5.00px;transform:scaleX(0.9800)">Cam Ward</span></div>
<div class="c" style="left:787.7px;top:391.8px;width:79.20px;height:36.20px"><span class="t" style="font-size:9.8px;color:#fff;font-weight:normal;font-family:'Liberation Sans', sans-serif;-webkit-text-stroke:0.25px #fff;left:2.90px;top:5.00px;transform:scaleX(0.9800)">Patrick Roy</span></div>
<div class="c" style="left:869px;top:352px;width:64.50px;height:38.70px"><span class="t" style="font-size:9.8px;color:#fff;font-weight:normal;font-family:'Liberation Sans', sans-serif;-webkit-text-stroke:0.25px #fff;left:2.90px;top:5.00px;transform:scaleX(0.9800)">Roberto Lu...</span></div>
<div class="c" style="left:869px;top:392.4px;width:64.50px;height:35.60px"><span class="t" style="font-size:9.8px;color:#fff;font-weight:normal;font-family:'Liberation Sans', sans-serif;-webkit-text-stroke:0.25px #fff;left:2.90px;top:5.00px;transform:scaleX(0.9800)">Ken Dryden</span></div>
<div class="c" style="left:935.4px;top:352px;width:44.60px;height:38.70px"><span class="t" style="font-size:9.8px;color:#fff;font-weight:normal;font-family:'Liberation Sans', sans-serif;-webkit-text-stroke:0.25px #fff;left:2.90px;top:5.00px;transform:scaleX(0.9800)">Anna ...</span></div>
<div class="c" style="left:935.4px;top:391.8px;width:44.60px;height:36.20px"><span class="t" style="font-size:9.8px;color:#fff;font-weight:normal;font-family:'Liberation Sans', sans-serif;-webkit-text-stroke:0.25px #fff;left:2.90px;top:5.00px;transform:scaleX(0.9800)">Billy S...</span></div>
<div class="c" style="left:24.2px;top:451.9px;width:958.50px;height:13.40px"><span class="t" style="font-size:12px;color:#fff;font-weight:bold;font-family:'Liberation Sans', sans-serif;left:441.65px;top:2.34px;transform:scaleX(0.9750)">What's Next ?</span></div>
<span class="t" style="font-size:12px;color:#4e5096;font-weight:bold;font-family:'Liberation Sans', sans-serif;left:25.70px;top:469.24px;transform:scaleX(0.9904)">Uncompleted Milestones</span>
<span class="t" style="font-size:12px;color:#4e5096;font-weight:bold;font-family:'Liberation Sans', sans-serif;left:530.30px;top:468.94px;transform:scaleX(0.9933)">Milestones Related Tasks</span>
<div class="c" style="left:26px;top:483px;width:487.50px;height:26.00px"><span class="t" style="font-size:10px;color:#555;font-weight:normal;font-family:'Liberation Sans', sans-serif;left:4.40px;top:6.54px;transform:scaleX(0.9900)">BufferEndDate</span></div>
<div class="c" style="left:26px;top:483px;width:487.50px;height:26.00px"><span class="t" style="font-size:10px;color:#555;font-weight:normal;font-family:'Liberation Sans', sans-serif;left:106.80px;top:6.54px;transform:scaleX(0.9900)">ProjectName</span></div>
<div class="c" style="left:26px;top:483px;width:487.50px;height:26.00px"><span class="t" style="font-size:10px;color:#555;font-weight:normal;font-family:'Liberation Sans', sans-serif;left:172.80px;top:6.54px;transform:scaleX(0.9900)">ResponsibleName</span></div>
<div class="c" style="left:26px;top:483px;width:487.50px;height:26.00px"><span class="t" style="font-size:10px;color:#555;font-weight:normal;font-family:'Liberation Sans', sans-serif;left:261.60px;top:6.54px;transform:scaleX(0.9900)">CustomerName</span></div>
<div class="c" style="left:26px;top:483px;width:487.50px;height:26.00px"><span class="t" style="font-size:10px;color:#555;font-weight:normal;font-family:'Liberation Sans', sans-serif;left:389.70px;top:6.54px;transform:scaleX(0.9900)">MilestoneLabelEnglish</span></div>
<span class="t" style="font-size:10px;color:#fff;font-weight:normal;font-family:'Liberation Sans', sans-serif;-webkit-text-stroke:0.3px #fff;left:30.60px;top:515.03px;transform:scaleX(0.9813)">March 13, 2015</span>
<div class="c" style="left:285px;top:509.3px;width:127.00px;height:18.00px"><span class="t" style="font-size:10px;color:#555;font-weight:normal;font-family:'Liberation Sans', sans-serif;left:3.30px;top:5.93px;transform:scaleX(1.0000)">Astral Construction Co Ltd.</span></div>
<div class="c" style="left:413px;top:509.3px;width:101.00px;height:18.00px"><span class="t" style="font-size:10px;color:#555;font-weight:normal;font-family:'Liberation Sans', sans-serif;left:3.30px;top:5.93px;transform:scaleX(1.0000)">MILESTONE</span></div>
<span class="t" style="font-size:10px;color:#fff;font-weight:normal;font-family:'Liberation Sans', sans-serif;-webkit-text-stroke:0.3px #fff;left:30.60px;top:533.08px;transform:scaleX(0.9813)">March 16, 2015</span>
<span class="t" style="font-size:10px;color:#555;font-weight:normal;font-family:'Liberation Sans', sans-serif;left:133.30px;top:533.28px;transform:scaleX(0.9300)">CR2015</span>
<div class="c" style="left:285px;top:527.3px;width:127.00px;height:18.10px"><span class="t" style="font-size:10px;color:#555;font-weight:normal;font-family:'Liberation Sans', sans-serif;left:3.30px;top:5.98px;transform:scaleX(1.0000)">Richardson International</span></div>
<div class="c" style="left:413px;top:527.3px;width:101.00px;height:18.10px"><span class="t" style="font-size:10px;color:#555;font-weight:normal;font-family:'Liberation Sans', sans-serif;left:3.30px;top:5.98px;transform:scaleX(1.0000)">Customert Approval</span></div>
<span class="t" style="font-size:10px;color:#fff;font-weight:normal;font-family:'Liberation Sans', sans-serif;-webkit-text-stroke:0.3px #fff;left:30.60px;top:551.19px;transform:scaleX(0.9813)">March 20, 2015</span>
<div class="c" style="left:285px;top:545.4px;width:127.00px;height:18.10px"><span class="t" style="font-size:10px;color:#555;font-weight:normal;font-family:'Liberation Sans', sans-serif;left:3.30px;top:5.99px;transform:scaleX(1.0000)">Astral Construction Co Ltd.</span></div>
<div class="c" style="left:413px;top:545.4px;width:101.00px;height:18.10px"><span class="t" style="font-size:10px;color:#555;font-weight:normal;font-family:'Liberation Sans', sans-serif;left:3.30px;top:5.99px;transform:scaleX(1.0000)">MILESTONE</span></div>
<span class="t" style="font-size:10px;color:#fff;font-weight:normal;font-family:'Liberation Sans', sans-serif;-webkit-text-stroke:0.3px #fff;left:30.60px;top:569.28px;transform:scaleX(0.9813)">March 23, 2015</span>
<span class="t" style="font-size:10px;color:#555;font-weight:normal;font-family:'Liberation Sans', sans-serif;left:133.30px;top:569.48px;transform:scaleX(0.9300)">CR2015</span>
<div class="c" style="left:285px;top:563.5px;width:127.00px;height:18.10px"><span class="t" style="font-size:10px;color:#555;font-weight:normal;font-family:'Liberation Sans', sans-serif;left:3.30px;top:5.98px;transform:scaleX(1.0000)">Richardson International</span></div>
<div class="c" style="left:413px;top:563.5px;width:101.00px;height:18.10px"><span class="t" style="font-size:10px;color:#555;font-weight:normal;font-family:'Liberation Sans', sans-serif;left:3.30px;top:5.98px;transform:scaleX(1.0000)">Long Lead Purchasing</span></div>
<div class="c" style="left:530px;top:483px;width:443.00px;height:23.00px"><span class="t" style="font-size:10px;color:#555;font-weight:normal;font-family:'Liberation Sans', sans-serif;left:5.00px;top:5.04px;transform:scaleX(1.0000)">TaskEndDate</span></div>
<div class="c" style="left:530px;top:483px;width:443.00px;height:23.00px"><span class="t" style="font-size:10px;color:#555;font-weight:normal;font-family:'Liberation Sans', sans-serif;left:69.20px;top:5.04px;transform:scaleX(1.0000)">Item</span></div>
<div class="c" style="left:530px;top:483px;width:443.00px;height:23.00px"><span class="t" style="font-size:10px;color:#555;font-weight:normal;font-family:'Liberation Sans', sans-serif;left:219.50px;top:5.04px;transform:scaleX(1.0000)">PlannedQuantity</span></div>
<div class="c" style="left:530px;top:483px;width:443.00px;height:23.00px"><span class="t" style="font-size:10px;color:#555;font-weight:normal;font-family:'Liberation Sans', sans-serif;left:302.20px;top:5.04px;transform:scaleX(1.0000)">Machine</span></div>
<div class="c" style="left:530px;top:483px;width:443.00px;height:23.00px"><span class="t" style="font-size:10px;color:#555;font-weight:normal;font-family:'Liberation Sans', sans-serif;left:348.30px;top:5.04px;transform:scaleX(1.0000)">Operation</span></div>
<div class="c" style="left:530px;top:483px;width:443.00px;height:23.00px"><span class="t" style="font-size:10px;color:#555;font-weight:normal;font-family:'Liberation Sans', sans-serif;left:402.40px;top:5.04px;transform:scaleX(1.0000)">MaterialAvailability</span></div>
<span class="t" style="font-size:10px;color:#555;font-weight:normal;font-family:'Liberation Sans', sans-serif;left:535.00px;top:509.83px;transform:scaleX(0.9969)">2019-12-24</span>
<span class="t" style="font-size:10px;color:#555;font-weight:normal;font-family:'Liberation Sans', sans-serif;left:599.20px;top:509.83px;transform:scaleX(0.9204)">Z_CAPACITY_PLANNING_DEMO</span>
<span class="t" style="font-size:10px;color:#555;font-weight:normal;font-family:'Liberation Sans', sans-serif;left:805.23px;top:509.83px;transform:scaleX(1.0000)">1.00</span>
<span class="t" style="font-size:10px;color:#555;font-weight:normal;font-family:'Liberation Sans', sans-serif;left:832.00px;top:509.83px;transform:scaleX(1.0000)">10-ENG</span>
<span class="t" style="font-size:10px;color:#555;font-weight:normal;font-family:'Liberation Sans', sans-serif;left:878.30px;top:509.83px;transform:scaleX(1.0000)">ENG</span>
<span class="t" style="font-size:10px;color:#555;font-weight:normal;font-family:'Liberation Sans', sans-serif;left:932.00px;top:509.83px;transform:scaleX(1.0000)">OnHand</span>
<span class="t" style="font-size:10px;color:#555;font-weight:normal;font-family:'Liberation Sans', sans-serif;left:535.00px;top:525.18px;transform:scaleX(0.9969)">2019-12-30</span>
<span class="t" style="font-size:10px;color:#555;font-weight:normal;font-family:'Liberation Sans', sans-serif;left:599.20px;top:525.18px;transform:scaleX(0.9204)">Z_CAPACITY_PLANNING_DEMO</span>
<span class="t" style="font-size:10px;color:#555;font-weight:normal;font-family:'Liberation Sans', sans-serif;left:805.23px;top:525.18px;transform:scaleX(1.0000)">1.00</span>
<span class="t" style="font-size:10px;color:#555;font-weight:normal;font-family:'Liberation Sans', sans-serif;left:832.00px;top:525.18px;transform:scaleX(1.0000)">10-ENG</span>
<span class="t" style="font-size:10px;color:#555;font-weight:normal;font-family:'Liberation Sans', sans-serif;left:878.30px;top:525.18px;transform:scaleX(1.0000)">ENG</span>
<span class="t" style="font-size:10px;color:#555;font-weight:normal;font-family:'Liberation Sans', sans-serif;left:932.00px;top:525.18px;transform:scaleX(1.0000)">OnHand</span>
<span class="t" style="font-size:10px;color:#555;font-weight:normal;font-family:'Liberation Sans', sans-serif;left:535.00px;top:540.63px;transform:scaleX(0.9969)">2020-01-01</span>
<span class="t" style="font-size:10px;color:#555;font-weight:normal;font-family:'Liberation Sans', sans-serif;left:599.20px;top:540.63px;transform:scaleX(0.9204)">Z_CAPACITY_PLANNING_DEMO</span>
<span class="t" style="font-size:10px;color:#555;font-weight:normal;font-family:'Liberation Sans', sans-serif;left:805.23px;top:540.63px;transform:scaleX(1.0000)">1.00</span>
<span class="t" style="font-size:10px;color:#555;font-weight:normal;font-family:'Liberation Sans', sans-serif;left:832.00px;top:540.63px;transform:scaleX(1.0000)">10-ENG</span>
<span class="t" style="font-size:10px;color:#555;font-weight:normal;font-family:'Liberation Sans', sans-serif;left:878.30px;top:540.63px;transform:scaleX(1.0000)">ENG</span>
<span class="t" style="font-size:10px;color:#555;font-weight:normal;font-family:'Liberation Sans', sans-serif;left:932.00px;top:540.63px;transform:scaleX(1.0000)">OnHand</span>
<span class="t" style="font-size:10px;color:#555;font-weight:normal;font-family:'Liberation Sans', sans-serif;left:535.00px;top:555.43px;transform:scaleX(0.9969)">2020-01-06</span>
<span class="t" style="font-size:10px;color:#555;font-weight:normal;font-family:'Liberation Sans', sans-serif;left:599.20px;top:555.43px;transform:scaleX(0.9204)">Z_CAPACITY_PLANNING_DEMO</span>
<span class="t" style="font-size:10px;color:#555;font-weight:normal;font-family:'Liberation Sans', sans-serif;left:805.23px;top:555.43px;transform:scaleX(1.0000)">1.00</span>
<span class="t" style="font-size:10px;color:#555;font-weight:normal;font-family:'Liberation Sans', sans-serif;left:832.00px;top:555.43px;transform:scaleX(1.0000)">10-ENG</span>
<span class="t" style="font-size:10px;color:#555;font-weight:normal;font-family:'Liberation Sans', sans-serif;left:878.30px;top:555.43px;transform:scaleX(1.0000)">ENG</span>
<span class="t" style="font-size:10px;color:#555;font-weight:normal;font-family:'Liberation Sans', sans-serif;left:932.00px;top:555.43px;transform:scaleX(1.0000)">OnHand</span>
<span class="t" style="font-size:10.5px;color:#222;font-weight:bold;font-family:'Liberation Sans', sans-serif;left:535.00px;top:569.61px;transform:scaleX(1.0000)">Total</span>
<span class="t" style="font-size:10px;color:#222;font-weight:bold;font-family:'Liberation Sans', sans-serif;left:778.87px;top:570.03px;transform:scaleX(1.0300)">19,206.00</span>
<svg style="position:absolute;left:0;top:0" width="1003" height="610" viewBox="0 0 1003 610"><rect x="128" y="51.7" width="144" height="259.3" rx="22" ry="22" fill="none" stroke="#5a5b8e" stroke-width="1.3"/><rect x="272.5" y="51.7" width="444.29999999999995" height="259.3" rx="22" ry="22" fill="none" stroke="#5a5b8e" stroke-width="1.3"/><rect x="717.3" y="51.7" width="272.70000000000005" height="259.3" rx="22" ry="22" fill="none" stroke="#5a5b8e" stroke-width="1.3"/><rect x="17" y="311" width="973" height="132.60000000000002" rx="22" ry="22" fill="none" stroke="#5a5b8e" stroke-width="1.3"/><rect x="17" y="443.6" width="973" height="153.69999999999993" rx="22" ry="22" fill="none" stroke="#5a5b8e" stroke-width="1.3"/></svg>
<div style="position:absolute;left:986.5px;top:37px;width:17px;height:573px;background:#fff"></div>
</div></body></html>
